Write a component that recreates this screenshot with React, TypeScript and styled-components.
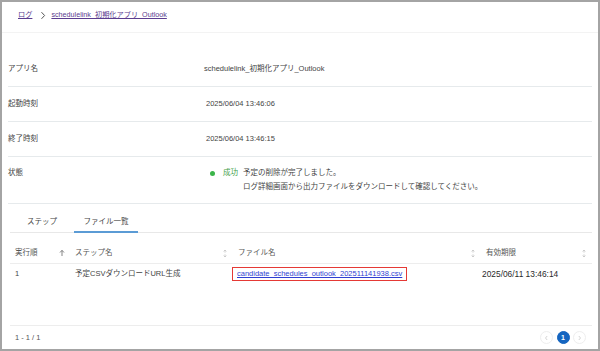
import React from "react";
import styled, { createGlobalStyle } from "styled-components";

const GlobalStyle = createGlobalStyle`
  html, body {
    margin: 0;
    padding: 0;
    background: #ffffff;
  }
  body {
    font-family: "Liberation Sans", "Noto Sans CJK JP", sans-serif;
  }
`;

interface Column {
  title: string;
  sort: "asc" | "none";
}

const columns: Column[] = [
  { title: "実行順", sort: "asc" },
  { title: "ステップ名", sort: "none" },
  { title: "ファイル名", sort: "none" },
  { title: "有効期限", sort: "none" },
];

const SortIcon = ({ sort }: { sort: "asc" | "none" }) => {
  if (sort === "asc") {
    return (
      <svg width="6" height="8" viewBox="0 0 6 8">
        <path d="M3 7V1.5M1 3.5L3 1.3L5 3.5" stroke="#777" strokeWidth="0.9" fill="none" />
      </svg>
    );
  }
  return (
    <svg width="6" height="9" viewBox="0 0 6 9">
      <path d="M3 1v2.6M1.6 2.4L3 1l1.4 1.4M3 8V5.4M1.6 6.6L3 8l1.4-1.4" stroke="#c4c4c4" strokeWidth="0.8" fill="none" />
    </svg>
  );
};

const App = () => {
  return (
    <>
      <GlobalStyle />
      <Frame>
        <Breadcrumb>
          <Crumb href="#">ログ</Crumb>
          <Chevron width="6" height="9" viewBox="0 0 6 9">
            <path d="M1.5 1.2L4.6 4.5L1.5 7.8" stroke="#555" strokeWidth="1" fill="none" />
          </Chevron>
          <Crumb href="#">schedulelink_初期化アプリ_Outlook</Crumb>
        </Breadcrumb>

        <Details>
          <DetailRow>
            <Label>アプリ名</Label>
            <Value>schedulelink_初期化アプリ_Outlook</Value>
          </DetailRow>
          <DetailRow>
            <Label>起動時刻</Label>
            <Value $shift={2}>2025/06/04 13:46:06</Value>
          </DetailRow>
          <DetailRow>
            <Label>終了時刻</Label>
            <Value $shift={2}>2025/06/04 13:46:15</Value>
          </DetailRow>
          <DetailRow $tall>
            <Label>状態</Label>
            <StatusCell>
              <Dot />
              <StatusText>成功</StatusText>
              <Message>
                予定の削除が完了しました。
                <br />
                ログ詳細画面から出力ファイルをダウンロードして確認してください。
              </Message>
            </StatusCell>
          </DetailRow>
        </Details>

        <TabBar>
          <Tab>ステップ</Tab>
          <Tab $active>ファイル一覧</Tab>
        </TabBar>

        <TableWrap>
          <HeaderRow>
            {columns.map((c) => (
              <HeadCell key={c.title}>
                <span>{c.title}</span>
                <SortIcon sort={c.sort} />
              </HeadCell>
            ))}
          </HeaderRow>
          <BodyRow>
            <Cell>1</Cell>
            <Cell>予定CSVダウンロードURL生成</Cell>
            <Cell>
              <FileLink href="#">candidate_schedules_outlook_202511141938.csv</FileLink>
            </Cell>
            <Cell>
              <DateText>2025/06/11 13:46:14</DateText>
            </Cell>
          </BodyRow>
        </TableWrap>

        <Footer>
          <span>1 - 1 / 1</span>
          <Pager>
            <PageButton>
              <svg width="5" height="6" viewBox="0 0 5 6">
                <path d="M3.2 1L1.5 3l1.7 2" stroke="#c8c8c8" strokeWidth="0.8" fill="none" />
              </svg>
            </PageButton>
            <PageButton $active>1</PageButton>
            <PageButton>
              <svg width="5" height="6" viewBox="0 0 5 6">
                <path d="M1.8 1l1.7 2-1.7 2" stroke="#c8c8c8" strokeWidth="0.8" fill="none" />
              </svg>
            </PageButton>
          </Pager>
        </Footer>
      </Frame>
    </>
  );
};

export default App;

const Frame = styled.div`
  box-sizing: border-box;
  width: 600px;
  height: 351px;
  border: 2px solid #a4a4a4;
  background: #ffffff;
  display: flex;
  flex-direction: column;
  font-size: 7.5px;
  color: #444;
  overflow: hidden;
`;

const Breadcrumb = styled.nav`
  box-sizing: border-box;
  height: 31px;
  padding: 6px 0 0 16px;
  border-bottom: 1px solid #f3f3f3;
  display: flex;
  align-items: flex-start;
  line-height: 14px;
  font-size: 7.2px;
`;

const Crumb = styled.a`
  color: #5b3c8f;
  text-decoration: underline;
`;

const Chevron = styled.svg`
  margin: 2.5px 5px 0 8px;
`;

const Details = styled.div`
  margin: 19px 6px 0 6px;
`;

const DetailRow = styled.div<{ $tall?: boolean }>`
  display: grid;
  grid-template-columns: 196px 1fr;
  padding: ${(p) => (p.$tall ? "9px 0" : "10px 0")};
  line-height: 14px;
  border-bottom: 1px solid #e6eaec;
`;

const Label = styled.div`
  color: #444;
`;

const Value = styled.div<{ $shift?: number }>`
  color: #444;
  padding-left: ${(p) => p.$shift ?? 0}px;
`;

const StatusCell = styled.div`
  display: flex;
  align-items: flex-start;
`;

const Dot = styled.span`
  width: 5px;
  height: 5px;
  border-radius: 50%;
  background: #3bb54a;
  margin: 4.5px 0 0 6px;
`;

const StatusText = styled.span`
  color: #43a047;
  margin: 0 5px 0 8px;
`;

const Message = styled.div`
  color: #444;
`;

const TabBar = styled.div`
  display: flex;
  margin: 8px 6px 0 8px;
  border-bottom: 1px solid #e8e8e8;
`;

const Tab = styled.div<{ $active?: boolean }>`
  width: 64px;
  text-align: center;
  line-height: 19px;
  color: #444;
  margin-bottom: -1px;
  border-bottom: 2px solid ${(p) => (p.$active ? "#5b9bd5" : "transparent")};
`;

const TableWrap = styled.div`
  flex: 1;
  margin: 10px 6px 0 8px;
`;

const gridCols = "60px 163px 248px 1fr";

const HeaderRow = styled.div`
  display: grid;
  grid-template-columns: ${gridCols};
  border-bottom: 1px solid #ededed;
`;

const HeadCell = styled.div`
  display: flex;
  align-items: center;
  justify-content: space-between;
  padding: 0 5px;
  line-height: 20px;
  color: #555;
`;

const BodyRow = styled.div`
  display: grid;
  grid-template-columns: ${gridCols};
`;

const Cell = styled.div`
  padding: 3px 5px 0 5px;
  line-height: 14px;
  color: #444;
`;

const FileLink = styled.a`
  display: inline-block;
  margin-left: -6px;
  padding: 0 4px;
  line-height: 12px;
  border: 1.5px solid #e53935;
  color: #2f3fd2;
  text-decoration: underline;
`;

const DateText = styled.span`
  margin-left: -4px;
  font-size: 8.4px;
  color: #2a2a2a;
`;

const Footer = styled.div`
  box-sizing: border-box;
  height: 24px;
  margin: 0 6px 0 8px;
  padding: 0 6px 0 5px;
  border-top: 1px solid #ededed;
  display: flex;
  align-items: center;
  justify-content: space-between;
  color: #555;
`;

const Pager = styled.div`
  display: flex;
  gap: 3.5px;
`;

const PageButton = styled.div<{ $active?: boolean }>`
  box-sizing: border-box;
  width: 13px;
  height: 13px;
  border-radius: 50%;
  display: flex;
  align-items: center;
  justify-content: center;
  font-size: 7px;
  font-weight: bold;
  color: #ffffff;
  background: ${(p) => (p.$active ? "#1565c0" : "#ffffff")};
  border: 1px solid ${(p) => (p.$active ? "#1565c0" : "#eeeeee")};
`;
